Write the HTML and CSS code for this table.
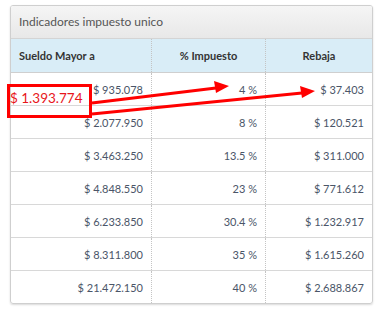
FILE: index.html
```html
<!DOCTYPE html>
<html>
<head>
<meta charset="utf-8">
<link rel="stylesheet" href="styles.css">
</head>
<body>
<div class="panel">
  <div class="panel-heading">Indicadores impuesto unico</div>
  <table class="grid">
    <thead>
      <tr>
        <th class="c1">Sueldo Mayor a</th>
        <th class="c2">% Impuesto</th>
        <th class="c3">Rebaja</th>
      </tr>
    </thead>
    <tbody>
      <tr><td>$ 935.078</td><td>4 %</td><td>$ 37.403</td></tr>
      <tr><td>$ 2.077.950</td><td>8 %</td><td>$ 120.521</td></tr>
      <tr><td>$ 3.463.250</td><td>13.5 %</td><td>$ 311.000</td></tr>
      <tr><td>$ 4.848.550</td><td>23 %</td><td>$ 771.612</td></tr>
      <tr><td>$ 6.233.850</td><td>30.4 %</td><td>$ 1.232.917</td></tr>
      <tr><td>$ 8.311.800</td><td>35 %</td><td>$ 1.615.260</td></tr>
      <tr><td>$ 21.472.150</td><td>40 %</td><td>$ 2.688.867</td></tr>
    </tbody>
  </table>
</div>
<div class="note">$ 1.393.774</div>
<svg class="arrows" width="386" height="313" viewBox="0 0 386 313">
  <line x1="92" y1="103" x2="216" y2="88" stroke="#f00" stroke-width="3"/>
  <polygon points="229,86 214,81 216,93" fill="#f00"/>
  <line x1="92" y1="114" x2="302" y2="93" stroke="#f00" stroke-width="3"/>
  <polygon points="315,91 300,86 302,98" fill="#f00"/>
</svg>
</body>
</html>
```
FILE: styles.css
```css
html, body {
  margin: 0;
  padding: 0;
  background: #fff;
}
body {
  font-family: Lato, "Open Sans", sans-serif;
  position: relative;
  width: 386px;
  height: 313px;
  overflow: hidden;
}
.panel {
  margin: 5px 0 0 10px;
  width: 361px;
  border: 1px solid #cfcfcf;
  border-radius: 3px;
  box-shadow: 0 1px 2px rgba(0,0,0,0.15);
  overflow: hidden;
}
.panel-heading {
  height: 32px;
  line-height: 32px;
  padding-left: 8px;
  font-size: 12px;
  color: #555;
  background: linear-gradient(#f5f5f5, #e8e8e8);
  border-bottom: 1px solid #d4d4d4;
}
.grid {
  width: 100%;
  border-collapse: collapse;
  table-layout: fixed;
}
.grid th {
  height: 33px;
  padding: 0 8px;
  background: #d9edf7;
  color: #333;
  font-size: 11px;
  font-weight: bold;
  border-bottom: 1px solid #cfcfcf;
  border-left: 1px dotted #c4c4c4;
}
.grid th.c1 { text-align: left; width: 124px; border-left: none; }
.grid th.c2 { text-align: center; width: 97px; }
.grid th.c3 { text-align: center; }
.grid td {
  height: 32px;
  padding: 0 8px;
  text-align: right;
  font-size: 11px;
  color: #4a5568;
  border-top: 1px solid #d8d8d8;
  border-left: 1px dotted #c4c4c4;
}
.grid td:first-child { border-left: none; }
.grid tbody tr:first-child td { border-top: none; }
.note {
  position: absolute;
  left: 7px;
  top: 84px;
  width: 85px;
  height: 34px;
  box-sizing: border-box;
  border: 3px solid #f00;
  color: #e8161b;
  font-size: 13.5px;
  line-height: 22px;
  padding-left: 0;
  white-space: nowrap;
}
.arrows {
  position: absolute;
  left: 0;
  top: 0;
}
```
